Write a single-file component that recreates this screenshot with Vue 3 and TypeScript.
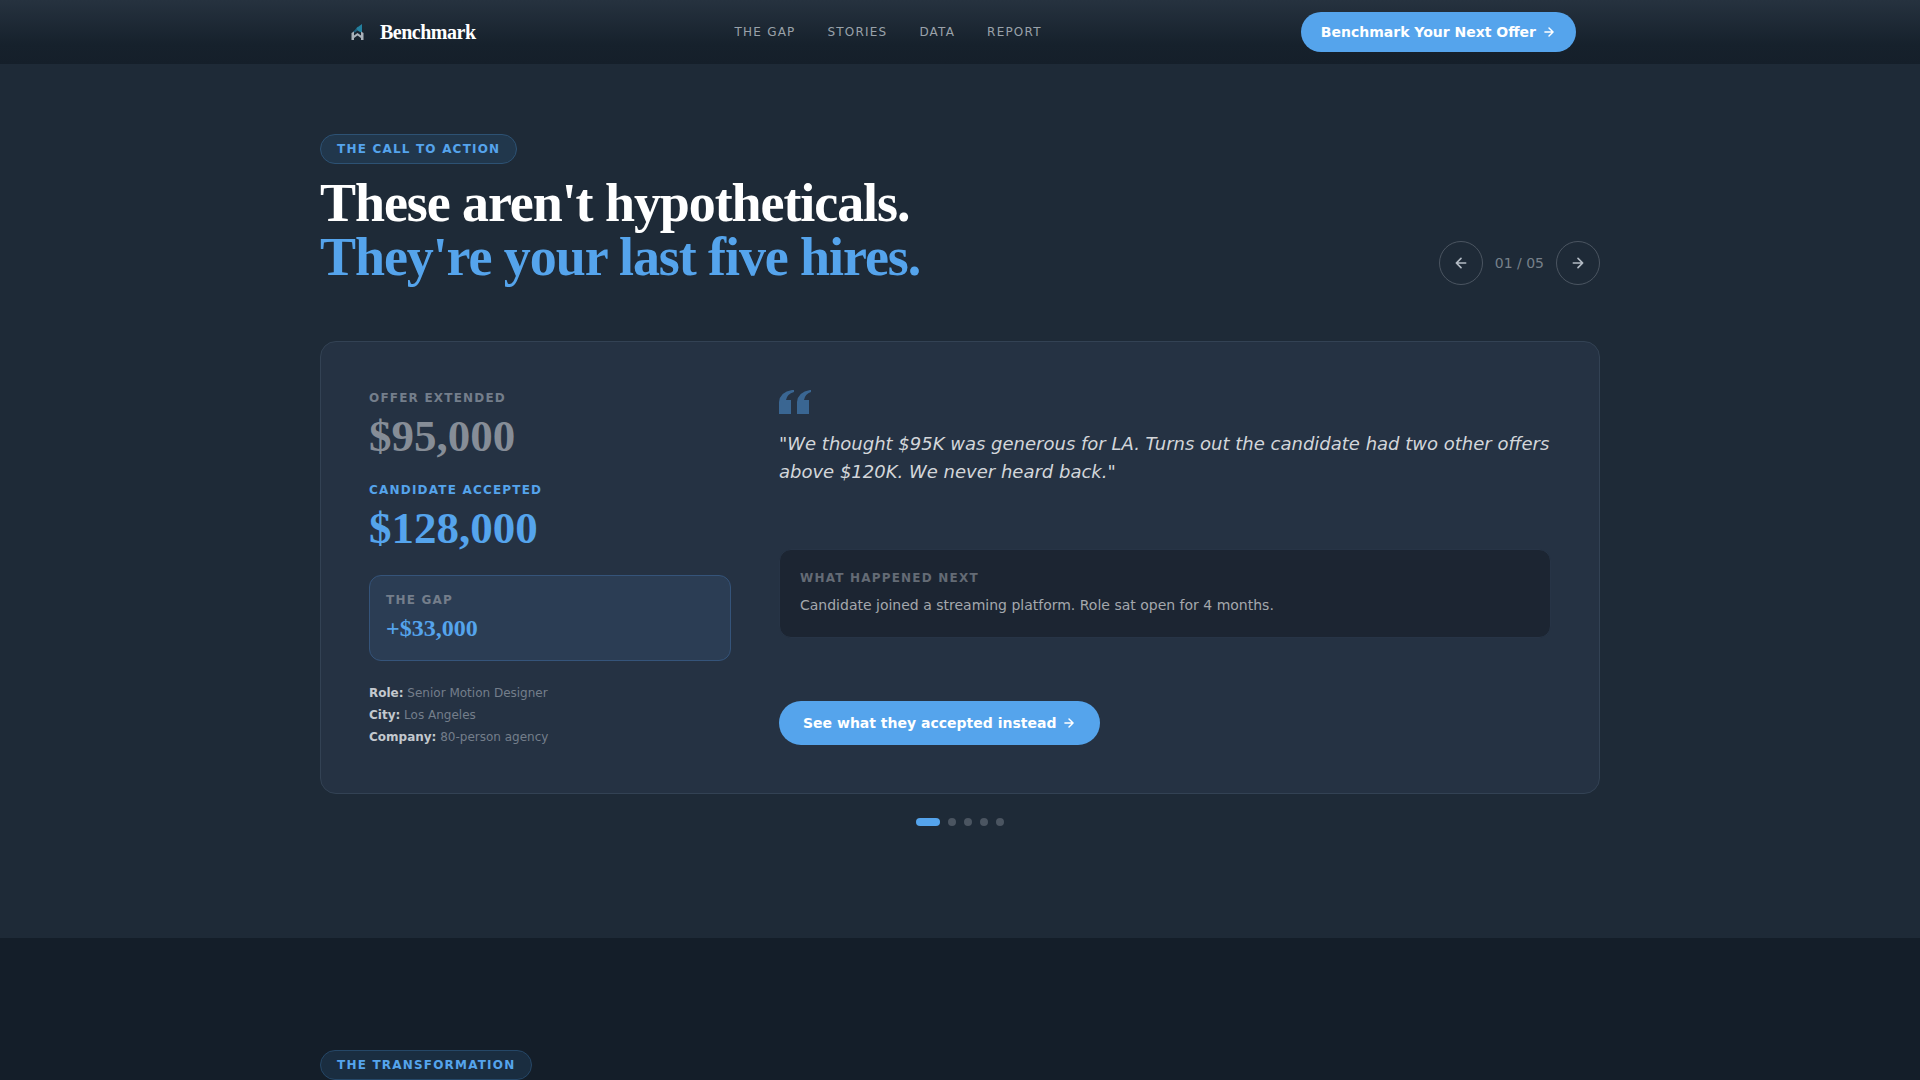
<script setup lang="ts">
import { computed, ref } from 'vue'

interface Story {
  offer: string
  accepted: string
  gap: string
  role: string
  city: string
  company: string
  quote: string
  outcome: string
}

const links = [
  { label: 'The Gap', href: '#gap' },
  { label: 'Stories', href: '#stories' },
  { label: 'Data', href: '#data' },
  { label: 'Report', href: '#report' },
]

const story: Story = {
  offer: '$95,000',
  accepted: '$128,000',
  gap: '+$33,000',
  role: 'Senior Motion Designer',
  city: 'Los Angeles',
  company: '80-person agency',
  quote:
    '"We thought $95K was generous for LA. Turns out the candidate had two other offers above $120K. We never heard back."',
  outcome: 'Candidate joined a streaming platform. Role sat open for 4 months.',
}

const total = 5
const current = ref(0)
const pad = (n: number): string => String(n).padStart(2, '0')
const counter = computed(() => `${pad(current.value + 1)} / ${pad(total)}`)

function step(delta: number): void {
  current.value = (current.value + delta + total) % total
}
</script>

<template>
  <div class="page">
    <header class="topbar">
      <div class="topbar-inner">
        <a class="brand" href="#top">
          <svg class="brand-mark" viewBox="0 0 28 28" aria-hidden="true">
            <path d="M8.5 14.5 14 8.5V12L11 14.5Z" fill="#1f5f7c" />
            <path d="M12.5 10 18 6V15L13.5 12.5Z" fill="#23809f" />
            <path
              d="M7.5 22V15L10 13.5V17.5L13.5 15 17 17.5V13.5L19.5 15V22H17V20L13.5 17.5 10 20V22Z"
              fill="#aab2ba"
            />
          </svg>
          <span>Benchmark</span>
        </a>
        <nav class="nav" aria-label="Main">
          <a v-for="link in links" :key="link.label" :href="link.href">{{ link.label }}</a>
        </nav>
        <a class="pill pill-small" href="#benchmark">
          Benchmark Your Next Offer
          <svg class="arrow" viewBox="0 0 24 24" aria-hidden="true"><path d="M5 12h14M12 5l7 7-7 7" /></svg>
        </a>
      </div>
    </header>

    <main>
      <section id="stories" class="stories">
        <div class="container">
          <div class="section-head">
            <div>
              <span class="badge">The Call to Action</span>
              <h2>These aren't hypotheticals.<br /><em>They're your last five hires.</em></h2>
            </div>
            <div class="pager">
              <button type="button" aria-label="Previous story" @click="step(-1)">
                <svg class="icon" viewBox="0 0 24 24" aria-hidden="true"><path d="M19 12H5M12 19l-7-7 7-7" /></svg>
              </button>
              <span>{{ counter }}</span>
              <button type="button" aria-label="Next story" @click="step(1)">
                <svg class="icon" viewBox="0 0 24 24" aria-hidden="true"><path d="M5 12h14M12 5l7 7-7 7" /></svg>
              </button>
            </div>
          </div>

          <article class="card">
            <div class="figures">
              <p class="label">Offer Extended</p>
              <p class="amount muted">{{ story.offer }}</p>
              <p class="label accent">Candidate Accepted</p>
              <p class="amount accent">{{ story.accepted }}</p>
              <div class="gap-box">
                <p class="label">The Gap</p>
                <p class="gap-value">{{ story.gap }}</p>
              </div>
              <ul class="facts">
                <li><strong>Role:</strong> {{ story.role }}</li>
                <li><strong>City:</strong> {{ story.city }}</li>
                <li><strong>Company:</strong> {{ story.company }}</li>
              </ul>
            </div>

            <div class="story">
              <div>
                <svg class="quote-mark" viewBox="0 0 32 24" aria-hidden="true">
                  <path d="M0 24V12Q1 2 13 0H15V2Q8 4 7 10H12V24ZM18 24V12Q19 2 31 0H32V2Q26 4 25 10H30V24Z" />
                </svg>
                <blockquote>{{ story.quote }}</blockquote>
              </div>
              <div class="outcome">
                <p class="label">What Happened Next</p>
                <p>{{ story.outcome }}</p>
              </div>
              <a class="pill" href="#accepted">
                See what they accepted instead
                <svg class="arrow" viewBox="0 0 24 24" aria-hidden="true"><path d="M5 12h14M12 5l7 7-7 7" /></svg>
              </a>
            </div>
          </article>

          <div class="dots">
            <button
              v-for="n in total"
              :key="n"
              type="button"
              :class="{ active: n - 1 === current }"
              :aria-label="`Go to story ${n}`"
              @click="current = n - 1"
            ></button>
          </div>
        </div>
      </section>

      <section id="data" class="transformation">
        <div class="container">
          <span class="badge">The Transformation</span>
        </div>
      </section>
    </main>
  </div>
</template>

<style>
body {
  margin: 0;
  background: #141e29;
}
</style>

<style scoped>
.page {
  --accent: #55a4ec;
  color: #fff;
  font-family: 'DejaVu Sans', sans-serif;
  font-size: 14px;
}

.page * {
  box-sizing: border-box;
}

p,
h2,
ul,
blockquote {
  margin: 0;
  padding: 0;
}

a {
  color: inherit;
  text-decoration: none;
}

button {
  padding: 0;
  border: 0;
  background: none;
  color: inherit;
  font: inherit;
  cursor: pointer;
}

.container,
.topbar-inner {
  max-width: 1280px;
  margin: 0 auto;
}

.topbar {
  position: sticky;
  top: 0;
  z-index: 10;
  background: linear-gradient(180deg, #26323f 0%, #16212c 70%, #151f2a 100%);
}

.topbar-inner {
  display: flex;
  align-items: center;
  justify-content: space-between;
  height: 64px;
  padding: 0 24px;
}

.brand {
  display: flex;
  align-items: center;
  gap: 8px;
  font-family: 'Liberation Serif', serif;
  font-size: 20px;
  font-weight: 700;
  letter-spacing: -0.5px;
}

.brand-mark {
  width: 28px;
  height: 28px;
}

.nav {
  display: flex;
  gap: 32px;
  color: #9aa2aa;
  font-size: 12px;
  letter-spacing: 0.1em;
  text-transform: uppercase;
}

.pill {
  display: inline-flex;
  align-items: center;
  gap: 6px;
  height: 44px;
  padding: 0 24px;
  border-radius: 22px;
  background: var(--accent);
  font-size: 14px;
  font-weight: 700;
}

.pill-small {
  height: 40px;
  padding: 0 20px;
}

.arrow,
.icon {
  width: 14px;
  height: 14px;
  fill: none;
  stroke: currentColor;
  stroke-width: 2.5;
  stroke-linecap: round;
  stroke-linejoin: round;
}

.icon {
  width: 16px;
  height: 16px;
}

.stories {
  padding: 70px 0 112px;
  background: #1e2a37;
}

.transformation {
  padding-top: 112px;
}

.container {
  display: flow-root;
}

.badge {
  display: block;
  width: fit-content;
  padding: 0 16px;
  border: 1px solid #2d5274;
  border-radius: 15px;
  background: #21374c;
  color: var(--accent);
  font-size: 12px;
  font-weight: 700;
  line-height: 28px;
  letter-spacing: 0.1em;
  text-transform: uppercase;
}

.transformation .badge {
  border-color: #254767;
  background: #1a2d40;
}

.section-head {
  display: flex;
  align-items: flex-end;
  justify-content: space-between;
  margin-bottom: 56px;
}

h2 {
  margin: 12px 0 1px;
  font-family: 'Liberation Serif', serif;
  font-size: 54px;
  font-weight: 700;
  line-height: 54px;
  letter-spacing: -0.02em;
}

h2 em {
  color: var(--accent);
  font-style: normal;
}

.pager {
  display: flex;
  align-items: center;
  gap: 12px;
  color: #77808a;
}

.pager button {
  display: grid;
  place-items: center;
  width: 44px;
  height: 44px;
  border: 1px solid #4b5561;
  border-radius: 50%;
  color: #b4bcc5;
}

.card {
  display: grid;
  grid-template-columns: repeat(12, minmax(0, 1fr));
  column-gap: 48px;
  padding: 48px;
  border: 1px solid #334254;
  border-radius: 16px;
  background: #253243;
}

.figures {
  grid-column: span 4;
}

.story {
  display: flex;
  grid-column: span 8;
  flex-direction: column;
  align-items: flex-start;
  justify-content: space-between;
}

.label {
  color: #747e8b;
  font-size: 12px;
  font-weight: 700;
  line-height: 16px;
  letter-spacing: 0.1em;
  text-transform: uppercase;
}

.amount {
  margin: 6px 0 22px;
  font-family: 'Liberation Serif', serif;
  font-size: 45px;
  font-weight: 700;
  line-height: 48px;
}

.muted {
  color: #868d97;
}

.accent {
  color: var(--accent);
}

.gap-box {
  margin: 23px 0 22px;
  padding: 16px;
  border: 1px solid #35547a;
  border-radius: 12px;
  background: #2b3d54;
}

.gap-value {
  margin: 6px 0 2px;
  color: var(--accent);
  font-family: 'Liberation Serif', serif;
  font-size: 24px;
  font-weight: 700;
  line-height: 28px;
}

.facts {
  display: grid;
  gap: 2px;
  color: #747e8b;
  font-size: 12px;
  line-height: 20px;
  list-style: none;
}

.facts strong {
  color: #c3c8ce;
}

.card {
  padding-bottom: 46px;
}

.story {
  padding-bottom: 2px;
}

.quote-mark {
  display: block;
  width: 32px;
  height: 24px;
  fill: #3a6692;
}

blockquote {
  margin-top: 16px;
  color: #d3d6da;
  font-size: 18px;
  font-style: italic;
  line-height: 28px;
}

.outcome {
  align-self: stretch;
  padding: 20px;
  border: 1px solid #273446;
  border-radius: 12px;
  background: #1c2532;
  color: #a4a8ad;
  line-height: 24px;
}

.outcome .label {
  margin-bottom: 7px;
  color: #646b75;
}

.dots {
  display: flex;
  justify-content: center;
  gap: 8px;
  margin-top: 24px;
}

.dots button {
  width: 8px;
  height: 8px;
  border-radius: 4px;
  background: #4b5561;
}

.dots .active {
  width: 24px;
  background: var(--accent);
}
</style>
